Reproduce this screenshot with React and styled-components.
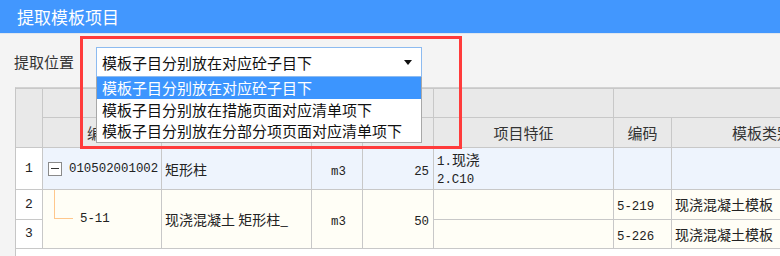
import React from "react";
import styled, { createGlobalStyle } from "styled-components";

const Global = createGlobalStyle`
  html, body { margin: 0; padding: 0; }
  body {
    width: 780px; height: 256px; overflow: hidden;
    background: #f4f4f4;
    font-family: "Noto Sans CJK SC", "Noto Sans", sans-serif;
  }
`;

const Window = styled.div`
  position: relative;
  width: 780px;
  height: 256px;
  overflow: hidden;
  background: #f4f4f4;
  display: flex;
  flex-direction: column;
`;

const TitleBar = styled.div`
  height: 33px;
  flex: none;
  background: #4297fe;
  border-bottom: 1px solid #dfe6ee;
  color: #fff;
  font-size: 17px;
  display: flex;
  align-items: center;
  padding-left: 17px;
  box-sizing: content-box;
`;

const PickRow = styled.div`
  flex: none;
  height: 53px;
  box-sizing: border-box;
  padding: 13px 0 0 14px;
  display: flex;
  align-items: flex-start;
  gap: 7px;
`;

const Label = styled.div`
  font-size: 15px;
  color: #333;
  height: 29px;
  line-height: 29px;
  width: 75px;
`;

const Select = styled.div`
  width: 326px;
  height: 30px;
  box-sizing: border-box;
  background: #fff;
  border: 1px solid #8dbbf0;
  display: flex;
  align-items: center;
  padding: 0 6px 0 5px;
  font-size: 15px;
  color: #111;
  justify-content: space-between;
`;

const Arrow = styled.svg`
  width: 8px;
  height: 5px;
  margin-right: 3px;
`;

const List = styled.div`
  position: absolute;
  left: 96px;
  top: 77px;
  width: 326px;
  box-sizing: border-box;
  background: #fff;
  border: 1px solid #a8a8a8;
  border-top: none;
  z-index: 3;
`;

const Item = styled.div`
  height: 21.5px;
  line-height: 21px;
  font-size: 15px;
  padding-left: 5px;
  color: ${(p) => (p.$active ? "#fff" : "#111")};
  background: ${(p) => (p.$active ? "#3c95fe" : "#fff")};
  white-space: nowrap;
`;

const Highlight = styled.div`
  position: absolute;
  left: 80px;
  top: 36px;
  width: 382px;
  height: 113px;
  box-sizing: border-box;
  border: 3px solid #ff3b3b;
  z-index: 4;
  pointer-events: none;
`;

const GridFrame = styled.div`
  flex: 1;
  margin-left: 15px;
  background: #fff;
  border-top: 1px solid #d2d2d2;
  border-left: 1px solid #c6c6c6;
  overflow: hidden;
`;

const Table = styled.table`
  border-collapse: collapse;
  table-layout: fixed;
  width: 837px;
  font-size: 14px;
  color: #222;
  margin-left: -1px;
`;

const Th = styled.th`
  background: #e9e9e9;
  border: 1px solid #c8c8c8;
  font-weight: normal;
  font-size: 15px;
  color: #333;
  padding: 0;
  text-align: center;
  white-space: nowrap;
  overflow: hidden;
`;

const HeadRow = styled.tr`
  height: ${(p) => p.$h}px;
`;

const Row = styled.tr`
  height: ${(p) => p.$h}px;
`;

const Td = styled.td`
  border: 1px solid #c8c8c8;
  padding: 0 ${(p) => (p.$right ? "4px" : "0")} 0 ${(p) => (p.$right ? "0" : "3px")};
  background: ${(p) => p.$bg || "#fff"};
  text-align: ${(p) => (p.$right ? "right" : p.$center ? "center" : "left")};
  vertical-align: ${(p) => (p.$top ? "top" : "middle")};
  white-space: nowrap;
  overflow: hidden;
`;

const Num = styled.td`
  border: 1px solid #c8c8c8;
  background: #fff;
  text-align: center;
  font-family: "Liberation Mono", monospace;
  font-size: 13px;
  color: #222;
  padding: 0;
`;

const Mono = styled.span`
  font-family: "Liberation Mono", "Noto Sans CJK SC", monospace;
  font-size: 12.4px;
  color: #222;
`;

const Feature = styled.div`
  padding-top: 2px;
  line-height: 18px;
  font-size: 12.4px;
  font-family: "Liberation Mono", monospace;
  span { font-family: "Noto Sans CJK SC", sans-serif; font-size: 14px; }
`;

const TreeCell = styled.div`
  display: flex;
  align-items: center;
  gap: 7px;
  padding-left: 2px;
`;

const Toggle = styled.span`
  width: 12px;
  height: 12px;
  border: 1px solid #8a8a8a;
  background: #fff;
  display: flex;
  align-items: center;
  justify-content: center;
  &::before {
    content: "";
    width: 8px;
    height: 1px;
    background: #333;
  }
`;

const ChildCell = styled.div`
  display: flex;
  align-items: stretch;
  height: 58px;
`;

const Connector = styled.span`
  margin-left: 11px;
  width: 19px;
  height: 29px;
  border-left: 1px solid #ffc78c;
  border-bottom: 1px solid #ffc78c;
  box-sizing: border-box;
`;

const ChildCode = styled.span`
  align-self: center;
  margin-left: 7px;
  font-family: "Liberation Mono", monospace;
  font-size: 12.4px;
`;

const BLUE = "#eef4fd";
const CREAM = "#fffef6";

export default function App() {
  return (
    <Window>
      <Global />
      <TitleBar>提取模板项目</TitleBar>
      <PickRow>
        <Label>提取位置</Label>
        <Select>
          <span>模板子目分别放在对应砼子目下</span>
          <Arrow viewBox="0 0 8 5">
            <path d="M0 0H8L4 5Z" fill="#111" />
          </Arrow>
        </Select>
      </PickRow>
      <List>
        <Item $active>模板子目分别放在对应砼子目下</Item>
        <Item>模板子目分别放在措施页面对应清单项下</Item>
        <Item>模板子目分别放在分部分项页面对应清单项下</Item>
      </List>
      <Highlight />
      <GridFrame>
        <Table>
          <colgroup>
            <col style={{ width: 27 }} />
            <col style={{ width: 119 }} />
            <col style={{ width: 150 }} />
            <col style={{ width: 51 }} />
            <col style={{ width: 71 }} />
            <col style={{ width: 180 }} />
            <col style={{ width: 58 }} />
            <col style={{ width: 181 }} />
          </colgroup>
          <thead>
            <HeadRow $h={29}>
              <Th rowSpan={2} />
              <Th colSpan={4} />
              <Th />
              <Th colSpan={2} />
            </HeadRow>
            <HeadRow $h={30}>
              <Th>编码</Th>
              <Th />
              <Th />
              <Th />
              <Th>项目特征</Th>
              <Th>编码</Th>
              <Th>模板类别</Th>
            </HeadRow>
          </thead>
          <tbody>
            <Row $h={41}>
              <Num>1</Num>
              <Td $bg={BLUE}>
                <TreeCell>
                  <Toggle />
                  <Mono>010502001002</Mono>
                </TreeCell>
              </Td>
              <Td $bg={BLUE}>矩形柱</Td>
              <Td $bg={BLUE} $center>
                <Mono>m3</Mono>
              </Td>
              <Td $bg={BLUE} $right>
                <Mono>25</Mono>
              </Td>
              <Td $bg={BLUE} $top>
                <Feature>
                  1.<span>现浇</span>
                  <br />
                  2.C10
                </Feature>
              </Td>
              <Td $bg={BLUE} />
              <Td $bg={BLUE} />
            </Row>
            <Row $h={29}>
              <Num>2</Num>
              <Td $bg={CREAM} rowSpan={2} style={{ padding: 0 }}>
                <ChildCell>
                  <Connector />
                  <ChildCode>5-11</ChildCode>
                </ChildCell>
              </Td>
              <Td $bg={CREAM} rowSpan={2}>现浇混凝土 矩形柱_</Td>
              <Td $bg={CREAM} rowSpan={2} $center>
                <Mono>m3</Mono>
              </Td>
              <Td $bg={CREAM} rowSpan={2} $right>
                <Mono>50</Mono>
              </Td>
              <Td $bg={CREAM} />
              <Td $bg={CREAM}>
                <Mono>5-219</Mono>
              </Td>
              <Td $bg={CREAM}>现浇混凝土模板</Td>
            </Row>
            <Row $h={29}>
              <Num>3</Num>
              <Td $bg={CREAM} />
              <Td $bg={CREAM}>
                <Mono>5-226</Mono>
              </Td>
              <Td $bg={CREAM}>现浇混凝土模板</Td>
            </Row>
          </tbody>
        </Table>
      </GridFrame>
    </Window>
  );
}
